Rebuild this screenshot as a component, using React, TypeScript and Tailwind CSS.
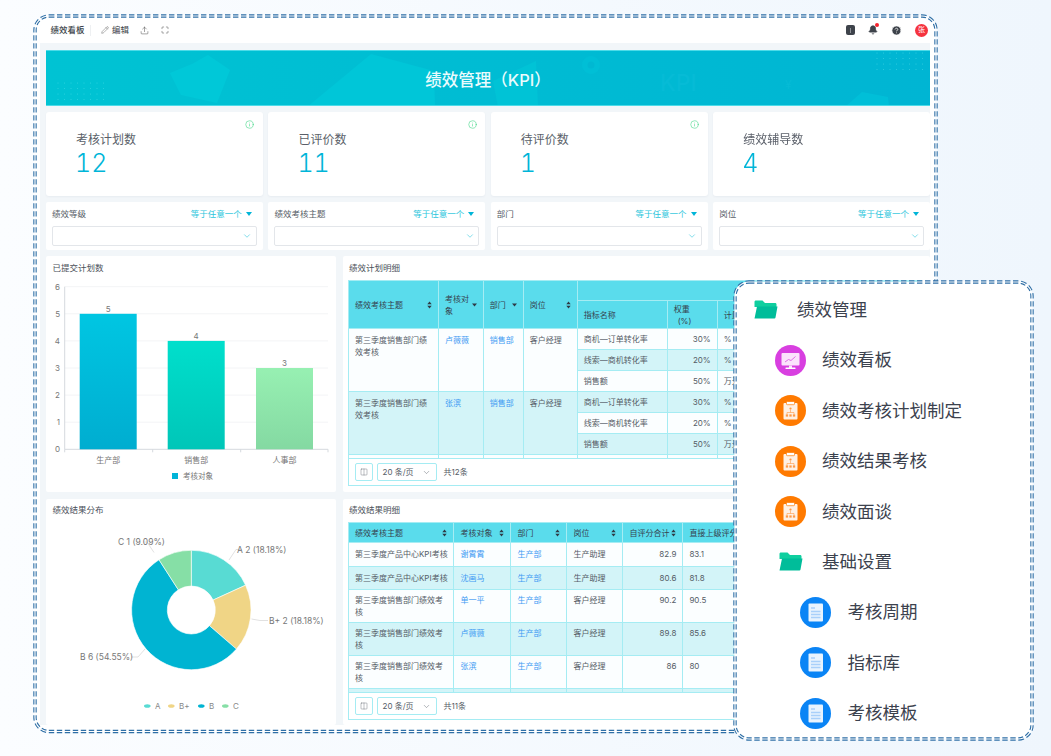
import React from "react";
import { ChevronDown, Pencil, Upload, Maximize, Info, Bell, CircleHelp, Columns2 } from "lucide-react";

const Sort = () => (
  <svg width="5" height="8" viewBox="0 0 5 8" className="shrink-0"><path d="M2.5 0.5L4.7 3.3H0.3ZM2.5 7.5L0.3 4.7H4.7Z" fill="#2f3a45" /></svg>
);
const Caret = () => (
  <svg width="5" height="4" viewBox="0 0 5 4" className="shrink-0"><path d="M0 0.5H5L2.5 3.5Z" fill="#2f3a45" /></svg>
);

const Folder = () => (
  <svg width="24" height="20" viewBox="0 0 24 20">
    <path d="M0.5 2C0.5 1 1 0.5 2 0.5H8.5L11 3H21C22 3 22.5 3.5 22.5 4.5V7H0.5Z" fill="#0fcf9f" />
    <path d="M0.5 18.5L3 6.6H23.5L21.5 17.6C21.4 18.2 21 18.5 20.4 18.5Z" fill="#00bd9a" />
  </svg>
);

const Clip = () => (
  <svg width="31" height="31" viewBox="0 0 31 31">
    <circle cx="15.5" cy="15.5" r="15.5" fill="#ff7a00" />
    <rect x="8.5" y="8" width="14" height="16.5" rx="1" fill="#fff1e4" />
    <rect x="11.5" y="6.5" width="8" height="3.2" rx="0.8" fill="#fff" stroke="#ff7a00" strokeWidth="0.7" />
    <circle cx="15.5" cy="13.6" r="1.1" fill="#ff9a45" />
    <path d="M15.5 15V17.5M12 19.5V17.5H19V19.5" stroke="#ff9a45" strokeWidth="0.6" fill="none" />
    <rect x="10.8" y="19.4" width="2.3" height="2.2" fill="#ff9a45" />
    <rect x="14.35" y="19.4" width="2.3" height="2.2" fill="#ff9a45" />
    <rect x="17.9" y="19.4" width="2.3" height="2.2" fill="#ff9a45" />
  </svg>
);

const Monitor = () => (
  <svg width="31" height="31" viewBox="0 0 31 31">
    <circle cx="15.5" cy="15.5" r="15.5" fill="#d83fe0" />
    <rect x="6.5" y="8" width="18" height="12.5" rx="1" fill="#fbe3fc" />
    <path d="M10 17L13.5 14.5L16 15.5L20.5 11.5" stroke="#e070e6" strokeWidth="1" fill="none" />
    <rect x="14" y="20.5" width="3" height="2.5" fill="#fbe3fc" />
    <rect x="10.5" y="22.5" width="10" height="1.4" rx="0.5" fill="#fff" />
  </svg>
);

const Doc = () => (
  <svg width="31" height="31" viewBox="0 0 31 31">
    <circle cx="15.5" cy="15.5" r="15.5" fill="#0a84f5" />
    <rect x="8.5" y="6.5" width="14.5" height="18" rx="1" fill="#e8f3fe" />
    <path d="M11 11H15M11 14.5H20.5M11 17.5H20.5M11 20.5H20.5" stroke="#a9d0fa" strokeWidth="1.3" />
  </svg>
);

const stats = [
  { label: "考核计划数", value: "12", info: true },
  { label: "已评价数", value: "11", info: true },
  { label: "待评价数", value: "1", info: true },
  { label: "绩效辅导数", value: "4", info: false },
];
const filters = ["绩效等级", "绩效考核主题", "部门", "岗位"];

const th = "border border-[#a5ecf3] bg-[#5adcec] px-[6px] font-normal text-left text-[#36434f] align-middle";
const td = "border border-[#a5ecf3] px-[6px] align-top text-[#555c66] leading-[12px]";
const link = "!text-[#3f9bf3]";

const PlanGroup = ({ name, who, first, empty }: { name: string; who: string; first: boolean; empty?: boolean }) => {
  const rows = [
    ["商机—订单转化率", "30%", "%"],
    ["线索—商机转化率", "20%", "%"],
    ["销售额", "50%", "万元"],
  ];
  const groupBg = first ? "bg-[#fbfeff]" : "bg-[#d3f4f8]";
  return (
    <>
      {rows.map((r, i) => {
        const striped = first ? i === 1 : i !== 1;
        const bg = striped ? "bg-[#d3f4f8]" : "bg-[#fbfeff]";
        const c = `${td} ${bg} py-[4px]`;
        return (
          <tr key={i} className="h-[21px]">
            {i === 0 && (
              <>
                <td rowSpan={3} className={`${td} ${groupBg} py-[5px]`}>{name}</td>
                <td rowSpan={3} className={`${td} ${groupBg} ${link} py-[5px]`}>{who}</td>
                <td rowSpan={3} className={`${td} ${groupBg} ${link} py-[5px]`}>{empty ? "" : "销售部"}</td>
                <td rowSpan={3} className={`${td} ${groupBg} py-[5px]`}>{empty ? "" : "客户经理"}</td>
              </>
            )}
            <td className={c}>{empty ? "" : r[0]}</td>
            <td className={`${c} text-right`}>{empty ? "" : r[1]}</td>
            <td className={`${c} whitespace-nowrap`}>{empty ? "" : r[2]}</td>
            <td className={c}></td>
          </tr>
        );
      })}
    </>
  );
};

const Pager = ({ total }: { total: string }) => (
  <div className="flex items-center h-full pl-[6px] text-[8px] text-[#555c66]">
    <div className="w-[18px] h-[18px] border border-[#a5ecf3] rounded-[2px] flex items-center justify-center">
      <Columns2 size={8} strokeWidth={1.2} color="#555c66" />
    </div>
    <div className="ml-[3.5px] w-[60px] h-[18px] border border-[#a5ecf3] rounded-[2px] flex items-center justify-between px-[5px]">
      <span>20 条/页</span>
      <ChevronDown size={9} strokeWidth={1.2} color="#555c66" />
    </div>
    <span className="ml-[7px]">{total}</span>
  </div>
);

const results: { a: string; b: string; c: string; d: string; e: string; h: number; dep: string }[] = [
  { a: "第三季度产品中心KPI考核", b: "谢霄霄", c: "生产助理", d: "82.9", e: "83.1", h: 23.5, dep: "生产部" },
  { a: "第三季度产品中心KPI考核", b: "沈画马", c: "生产助理", d: "80.6", e: "81.8", h: 23.5, dep: "生产部" },
  { a: "第三季度销售部门绩效考核", b: "单一平", c: "客户经理", d: "90.2", e: "90.5", h: 33, dep: "生产部" },
  { a: "第三季度销售部门绩效考核", b: "卢薇薇", c: "客户经理", d: "89.8", e: "85.6", h: 33, dep: "生产部" },
  { a: "第三季度销售部门绩效考核", b: "张滨", c: "客户经理", d: "86", e: "80", h: 33, dep: "生产部" },
  { a: "", b: "", c: "", d: "", e: "", h: 24, dep: "" },
];

const BarChart = () => {
  const ticks = [0, 1, 2, 3, 4, 5, 6];
  const y = (v: number) => 169.3 - v * 27.1;
  const bars = [
    { x: 33.7, v: 5, id: "b1", label: "生产部" },
    { x: 121.7, v: 4, id: "b2", label: "销售部" },
    { x: 210, v: 3, id: "b3", label: "人事部" },
  ];
  return (
    <svg width="290" height="212" viewBox="0 0 290 212" className="block">
      <defs>
        <linearGradient id="b1" x1="0" y1="0" x2="0" y2="1"><stop offset="0" stopColor="#00c6e2" /><stop offset="1" stopColor="#00add0" /></linearGradient>
        <linearGradient id="b2" x1="0" y1="0" x2="0" y2="1"><stop offset="0" stopColor="#00dfcc" /><stop offset="1" stopColor="#00c6b8" /></linearGradient>
        <linearGradient id="b3" x1="0" y1="0" x2="0" y2="1"><stop offset="0" stopColor="#97f0b2" /><stop offset="1" stopColor="#84d9a2" /></linearGradient>
      </defs>
      {ticks.map((t) => (
        <g key={t}>
          <line x1="18.7" x2="282" y1={y(t)} y2={y(t)} stroke={t === 0 ? "#d5d9de" : "#f3f4f6"} strokeWidth="1" />
          <text x="14" y={y(t) + 3} fontSize="8" fill="#777" textAnchor="end">{t}</text>
        </g>
      ))}
      <line x1="18.7" x2="18.7" y1={y(6)} y2={y(0)} stroke="#d5d9de" />
      {[18.7, 106.7, 194.7, 282].map((x) => (
        <line key={x} x1={x} x2={x} y1={y(0)} y2={y(0) + 3} stroke="#d5d9de" />
      ))}
      {bars.map((b) => (
        <g key={b.id}>
          <rect x={b.x} y={y(b.v)} width="57" height={b.v * 27.1} fill={`url(#${b.id})`} />
          <text x={b.x + 28.5} y={y(b.v) - 2} fontSize="8" fill="#777" textAnchor="middle">{b.v}</text>
          <text x={b.x + 28.5} y="183" fontSize="8" fill="#777" textAnchor="middle">{b.label}</text>
        </g>
      ))}
      <rect x="126" y="193" width="6" height="6" fill="#00b4d8" />
      <text x="137" y="199" fontSize="7.5" fill="#777">考核对象</text>
    </svg>
  );
};

const polar = (cx: number, cy: number, r: number, p: number) => {
  const a = p * 2 * Math.PI;
  return [cx + r * Math.sin(a), cy - r * Math.cos(a)];
};
const slice = (from: number, to: number) => {
  const cx = 145.3, cy = 88, R = 59.7, r = 24;
  const [x1, y1] = polar(cx, cy, R, from);
  const [x2, y2] = polar(cx, cy, R, to);
  const [x3, y3] = polar(cx, cy, r, to);
  const [x4, y4] = polar(cx, cy, r, from);
  const large = to - from > 0.5 ? 1 : 0;
  return `M${x1} ${y1}A${R} ${R} 0 ${large} 1 ${x2} ${y2}L${x3} ${y3}A${r} ${r} 0 ${large} 0 ${x4} ${y4}Z`;
};

const Donut = () => {
  const segs = [
    { from: 0, to: 0.1818, c: "#58dbd3" },
    { from: 0.1818, to: 0.3636, c: "#f0d586" },
    { from: 0.3636, to: 0.9091, c: "#00b4d2" },
    { from: 0.9091, to: 1, c: "#86dfa6" },
  ];
  const legend = [
    { x: 98, c: "#58dbd3", t: "A" },
    { x: 122, c: "#f0d586", t: "B+" },
    { x: 152, c: "#00b4d2", t: "B" },
    { x: 176, c: "#86dfa6", t: "C" },
  ];
  return (
    <svg width="290" height="203" viewBox="0 0 290 203" className="block">
      {segs.map((s) => (
        <path key={s.c} d={slice(s.from, s.to)} fill={s.c} stroke="#fff" strokeWidth="0.6" />
      ))}
      <path d="M183 38L190 27.5H196" stroke="#ccc" strokeWidth="0.6" fill="none" />
      <path d="M205.5 97L214 98.5H222" stroke="#ccc" strokeWidth="0.6" fill="none" />
      <path d="M99 127L92 135H85" stroke="#ccc" strokeWidth="0.6" fill="none" />
      <path d="M108 30.5L101 20H97" stroke="#ccc" strokeWidth="0.6" fill="none" />
      <g fontSize="8.5" fill="#777">
        <text x="191" y="30.5">A 2 (18.18%)</text>
        <text x="223" y="101.5">B+ 2 (18.18%)</text>
        <text x="34" y="138">B 6 (54.55%)</text>
        <text x="72" y="22.5">C 1 (9.09%)</text>
      </g>
      {legend.map((l) => (
        <g key={l.t}>
          <ellipse cx={l.x + 3.3} cy="184" rx="3.3" ry="1.8" fill={l.c} />
          <text x={l.x + 11} y="187" fontSize="8" fill="#888">{l.t}</text>
        </g>
      ))}
    </svg>
  );
};

const BannerArt = () => (
  <svg className="absolute inset-0" width="884" height="56" viewBox="0 0 884 56">
    <path d="M146 12L162 3L184 18L171 51L135 43L124 21Z" fill="#00c8d8" transform="translate(0 1)" />
    <path d="M261 56L325 3L388 20L389 56Z" fill="#00c6d8" />
    <path d="M447 30L490 10L492 56L452 56Z" fill="#00c3d6" />
    <circle cx="545" cy="14" r="9" fill="#00bfd6" />
    <circle cx="545" cy="14" r="3.5" fill="#00b8d2" />
    <text x="614" y="40" fontSize="23" fill="#06bbd6" fontWeight="500">KPI</text>
    <text x="739" y="38" fontSize="12" fill="#06bbd6">¥</text>
    <path d="M799 56L816 41L842 46L843 56Z" fill="#00bfd8" />
    {[0, 1, 2, 3].flatMap((r) =>
      [0, 1, 2, 3, 4, 5, 6, 7].map((c) => (
        <circle key={`a${r}${c}`} cx={12 + c * 6.5} cy={32 + r * 5.5} r="0.5" fill="#35d5e2" />
      ))
    )}
    {[0, 1, 2, 3].flatMap((r) =>
      [0, 1, 2, 3, 4, 5, 6, 7].map((c) => (
        <circle key={`b${r}${c}`} cx={831 + c * 6.5} cy={2 + r * 5.5} r="0.5" fill="#3acfe2" />
      ))
    )}
  </svg>
);

const Item = ({ icon, label, deep }: { icon: React.ReactNode; label: string; deep?: boolean }) => (
  <div className={`flex items-center h-[50.4px] ${deep ? "pl-[65px] gap-[16.5px]" : "pl-[40px] gap-[16px]"}`}>
    {icon}
    <span className="text-[17.5px] text-[#3c424e] whitespace-nowrap">{label}</span>
  </div>
);

export default function App() {
  return (
    <div className="relative w-[1051px] h-[756px] overflow-hidden bg-gradient-to-r from-[#fbfdff] to-[#eff6fd] font-['Inter','Noto_Sans_CJK_SC',sans-serif]">
      <div className="pl-[36px] pt-[17px]">
        <div className="w-[899px] h-[714px] bg-white rounded-[14px] overflow-hidden blur-[0.45px]">
          <div className="h-[26px] bg-white flex items-center pl-[14.5px] pr-[7px] text-[8.5px] text-[#3a3f48]">
            <span className="font-medium">绩效看板</span>
            <div className="w-px h-[11px] bg-[#eef0f2] ml-[5px]" />
            <Pencil size={8} strokeWidth={1.2} className="ml-[10px]" color="#444" />
            <span className="ml-[3.5px]">编辑</span>
            <Upload size={9} strokeWidth={1.3} className="ml-[11px]" color="#444" />
            <Maximize size={8} strokeWidth={1.5} className="ml-[12px]" color="#444" />
            <div className="ml-auto flex items-center">
              <div className="w-[9px] h-[10px] rounded-[2px] bg-[#3e434b] flex items-center justify-center">
                <div className="w-[1.5px] h-[5px] bg-[#8c9096]" />
              </div>
              <div className="relative ml-[13px]">
                <Bell size={10} fill="#3e434b" color="#3e434b" />
                <div className="absolute -top-[2px] -right-[1px] w-[4px] h-[4px] rounded-full bg-[#f5222d]" />
              </div>
              <CircleHelp size={11} fill="#3e434b" color="#fff" strokeWidth={1.6} className="ml-[13px]" />
              <div className="ml-[13px] w-[13px] h-[13px] rounded-full bg-[#f5333f] text-white text-[7px] flex items-center justify-center">张</div>
            </div>
          </div>

          <div className="ml-[4px] w-[890px] h-[682px] pl-[6px] bg-[#f2f6f9]">
            <div className="w-[884px] pt-[7px]">
              <div className="relative h-[56px] pt-[4px] border-y border-[#4ddbe8] flex items-center justify-center overflow-hidden bg-gradient-to-r from-[#00c3d3] to-[#00b5d3]">
                <BannerArt />
                <span className="relative text-[16.5px] font-medium text-[#eafbfd]">绩效管理（KPI）</span>
              </div>

              <div className="grid grid-cols-4 gap-[5.5px] mt-[6px]">
                {stats.map((s) => (
                  <div key={s.label} className="relative h-[84px] bg-white rounded-[3px] pl-[30px] pt-[19px] shadow-[0_1px_2px_rgba(30,60,90,0.05)]">
                    {s.info && <Info size={9} strokeWidth={1.4} color="#2fd27a" className="absolute right-[8.5px] top-[8px]" />}
                    <div className="text-[12px] leading-[17px] text-[#5a5f69]">{s.label}</div>
                    <div className="text-[25px] leading-[26px] font-light tabular-nums text-[#00b5d8] mt-[2px] -ml-[1px]">{s.value}</div>
                  </div>
                ))}
              </div>

              <div className="grid grid-cols-4 gap-[5.5px] mt-[6px]">
                {filters.map((f) => (
                  <div key={f} className="h-[48px] bg-white rounded-[2px] px-[6px] pt-[6px]">
                    <div className="flex items-center justify-between h-[12px] text-[8.5px] text-[#555c66] pr-[5px]">
                      <span>{f}</span>
                      <span className="flex items-center gap-[4px] text-[#2cc6dc]">
                        等于任意一个
                        <svg width="6" height="4" viewBox="0 0 6 4"><path d="M0 0H6L3 4Z" fill="#00b5d8" /></svg>
                      </span>
                    </div>
                    <div className="mt-[6px] h-[19.5px] border border-[#e3e6ea] rounded-[2px] flex items-center justify-end pr-[3.5px]">
                      <ChevronDown size={10} strokeWidth={1.4} color="#2cc6dc" />
                    </div>
                  </div>
                ))}
              </div>

              <div className="grid grid-cols-[290px_587px] gap-x-[7px] gap-y-[7px] mt-[6px]">
                <div className="h-[236px] bg-white rounded-[2px] overflow-hidden">
                  <div className="h-[24px] pl-[6.5px] flex items-center text-[8.5px] text-[#4a4f59]">已提交计划数</div>
                  <BarChart />
                </div>

                <div className="h-[236px] bg-white rounded-[2px] px-[5px] overflow-hidden">
                  <div className="h-[24px] pl-[1px] flex items-center text-[8.5px] text-[#4a4f59]">绩效计划明细</div>
                  <div className="w-[574px] h-[205.5px] border border-[#a5ecf3] border-t-0 text-[8px] overflow-hidden">
                    <div className="h-[178px] overflow-hidden">
                      <table className="table-fixed border-collapse w-[574px] -ml-px">
                        <colgroup>
                          <col className="w-[90px]" /><col className="w-[44.7px]" /><col className="w-[40px]" /><col className="w-[54px]" />
                          <col className="w-[90px]" /><col className="w-[50px]" /><col className="w-[44px]" /><col />
                        </colgroup>
                        <thead>
                          <tr className="h-[20px]">
                            <th rowSpan={2} className={th}><div className="flex items-center justify-between"><span>绩效考核主题</span><Sort /></div></th>
                            <th rowSpan={2} className={th}><div className="flex items-center justify-between leading-[12px]"><span>考核对象</span><Caret /></div></th>
                            <th rowSpan={2} className={th}><div className="flex items-center justify-between"><span>部门</span><Caret /></div></th>
                            <th rowSpan={2} className={th}><div className="flex items-center justify-between"><span>岗位</span><Sort /></div></th>
                            <th colSpan={4} className={th}></th>
                          </tr>
                          <tr className="h-[28px]">
                            <th className={th}>指标名称</th>
                            <th className={`${th} leading-[12px]`}>权重<br /><span className="pl-[4px]">(%)</span></th>
                            <th className={`${th} whitespace-nowrap`}>计量单位</th>
                            <th className={th}></th>
                          </tr>
                        </thead>
                        <tbody>
                          <PlanGroup name="第三季度销售部门绩效考核" who="卢薇薇" first />
                          <PlanGroup name="第三季度销售部门绩效考核" who="张滨" first={false} />
                          <PlanGroup name="" who="" first empty />
                        </tbody>
                      </table>
                    </div>
                    <div className="h-[27px] border-t border-[#a5ecf3]"><Pager total="共12条" /></div>
                  </div>
                </div>

                <div className="h-[226px] bg-white rounded-[2px] overflow-hidden">
                  <div className="h-[23px] pl-[6.5px] flex items-center text-[8.5px] text-[#4a4f59]">绩效结果分布</div>
                  <Donut />
                </div>

                <div className="h-[226px] bg-white rounded-[2px] px-[5px] overflow-hidden">
                  <div className="h-[23px] pl-[1px] flex items-center text-[8.5px] text-[#4a4f59]">绩效结果明细</div>
                  <div className="w-[574px] h-[197.5px] border border-[#a5ecf3] border-t-0 text-[8px] overflow-hidden">
                    <div className="h-[169.5px] overflow-hidden">
                      <table className="table-fixed border-collapse w-[574px] -ml-px">
                        <colgroup>
                          <col className="w-[105.4px]" /><col className="w-[57px]" /><col className="w-[56px]" /><col className="w-[56px]" /><col className="w-[60px]" /><col />
                        </colgroup>
                        <thead>
                          <tr className="h-[20px]">
                            {["绩效考核主题", "考核对象", "部门", "岗位", "自评分合计", "直接上级评分"].map((h) => (
                              <th key={h} className={th}>
                                <div className="flex items-center justify-between"><span className="whitespace-nowrap">{h}</span><Sort /></div>
                              </th>
                            ))}
                          </tr>
                        </thead>
                        <tbody>
                          {results.map((r, i) => {
                            const bg = i % 2 === 1 ? "bg-[#d3f4f8]" : "bg-[#fbfeff]";
                            const pad = r.h > 30 ? "py-[4px]" : "py-[5px]";
                            const c = `${td} ${bg} ${pad}`;
                            return (
                              <tr key={i} style={{ height: r.h }}>
                                <td className={`${c} ${r.h > 30 ? "" : "whitespace-nowrap !pr-0"}`}>{r.a}</td>
                                <td className={`${c} ${link}`}>{r.b}</td>
                                <td className={`${c} ${link}`}>{r.dep}</td>
                                <td className={c}>{r.c}</td>
                                <td className={`${c} text-right`}>{r.d}</td>
                                <td className={c}>{r.e}</td>
                              </tr>
                            );
                          })}
                        </tbody>
                      </table>
                    </div>
                    <div className="h-[28px] border-t border-[#a5ecf3]"><Pager total="共11条" /></div>
                  </div>
                </div>
              </div>
            </div>
          </div>
        </div>
      </div>

      <svg className="absolute inset-0 pointer-events-none" width="1051" height="756" viewBox="0 0 1051 756">
        <rect x="35" y="16" width="901" height="715.5" rx="14" fill="none" stroke="#2f6fa6" strokeWidth="3.4" strokeDasharray="5.4 2.6" />
        <rect x="35" y="16" width="901" height="715.5" rx="14" fill="none" stroke="#fff" strokeWidth="1.2" />
      </svg>

      <div className="absolute left-[735px] top-[282px] w-[297px] h-[457px] bg-white rounded-[14px] pt-[3px]">
        <div className="flex items-center h-[50.4px] pl-[19px] gap-[19px]">
          <Folder />
          <span className="text-[17.5px] text-[#3c424e]">绩效管理</span>
        </div>
        <Item icon={<Monitor />} label="绩效看板" />
        <Item icon={<Clip />} label="绩效考核计划制定" />
        <Item icon={<Clip />} label="绩效结果考核" />
        <Item icon={<Clip />} label="绩效面谈" />
        <div className="flex items-center h-[50.4px] pl-[44px] gap-[19px]">
          <Folder />
          <span className="text-[17.5px] text-[#3c424e]">基础设置</span>
        </div>
        <Item deep icon={<Doc />} label="考核周期" />
        <Item deep icon={<Doc />} label="指标库" />
        <Item deep icon={<Doc />} label="考核模板" />
      </div>

      <svg className="absolute inset-0 pointer-events-none" width="1051" height="756" viewBox="0 0 1051 756">
        <rect x="735" y="282" width="297" height="457" rx="14" fill="none" stroke="#2f6fa6" strokeWidth="3.4" strokeDasharray="5.4 2.6" />
        <rect x="735" y="282" width="297" height="457" rx="14" fill="none" stroke="#fff" strokeWidth="1.2" />
      </svg>
    </div>
  );
}
